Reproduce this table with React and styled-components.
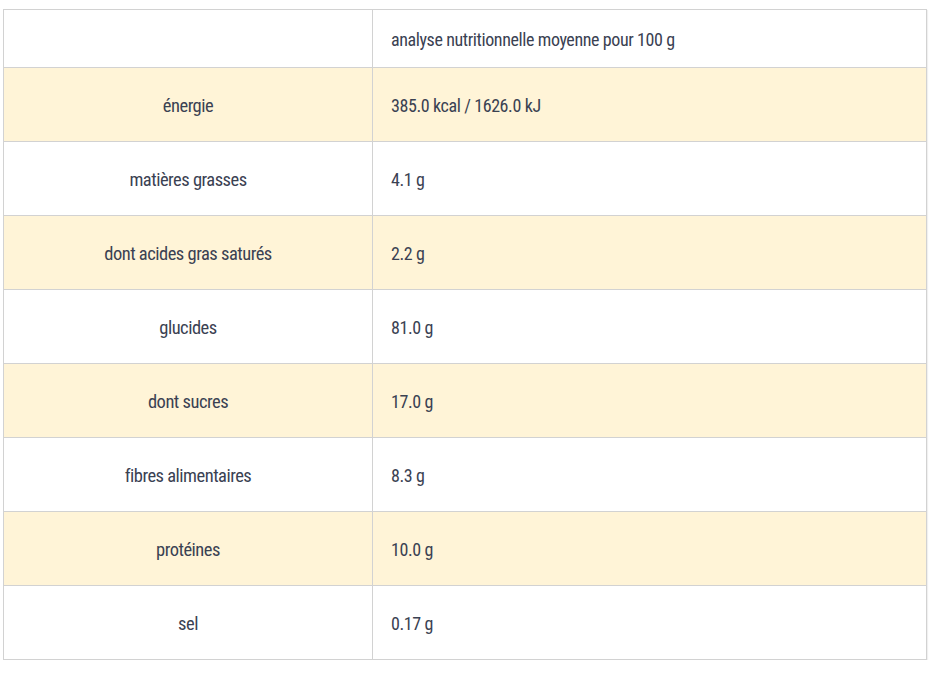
import React from 'react';
import styled, { createGlobalStyle } from 'styled-components';

const GlobalStyle = createGlobalStyle`
  body {
    margin: 0;
    background: #ffffff;
    font-family: "Roboto Condensed", "Liberation Sans Narrow", "DejaVu Sans Condensed", "Roboto", sans-serif;
  }
`;

const Page = styled.div`
  padding: 9px 14px 0 3px;
`;

const Table = styled.table`
  width: 924px;
  border-collapse: collapse;
  border: 1px solid #d2d2d2;
  box-shadow: 1px 1px 1px rgba(0, 0, 0, 0.06);
  color: #3a4152;
`;

const Row = styled.tr`
  height: ${(props) => (props.$head ? '58px' : '74px')};
  background-color: ${(props) => (props.$shaded ? '#fff4d7' : '#ffffff')};
`;

const LabelCell = styled.td`
  width: 368px;
  border: 1px solid #d2d2d2;
  text-align: center;
  vertical-align: middle;
  font-size: 18.5px;
  letter-spacing: -0.5px;
  padding: 2px 0 0;
`;

const ValueCell = styled.td`
  border: 1px solid #d2d2d2;
  text-align: left;
  vertical-align: middle;
  font-size: 18px;
  letter-spacing: -0.4px;
  padding: 2px 18px 0;
`;

const rows = [
  ['énergie', '385.0 kcal / 1626.0 kJ'],
  ['matières grasses', '4.1 g'],
  ['dont acides gras saturés', '2.2 g'],
  ['glucides', '81.0 g'],
  ['dont sucres', '17.0 g'],
  ['fibres alimentaires', '8.3 g'],
  ['protéines', '10.0 g'],
  ['sel', '0.17 g'],
];

export default function App() {
  return (
    <Page>
      <GlobalStyle />
      <Table>
        <tbody>
          <Row $head>
            <LabelCell />
            <ValueCell>analyse nutritionnelle moyenne pour 100 g</ValueCell>
          </Row>
          {rows.map(([label, value], i) => (
            <Row key={label} $shaded={i % 2 === 0}>
              <LabelCell>{label}</LabelCell>
              <ValueCell>{value}</ValueCell>
            </Row>
          ))}
        </tbody>
      </Table>
    </Page>
  );
}
